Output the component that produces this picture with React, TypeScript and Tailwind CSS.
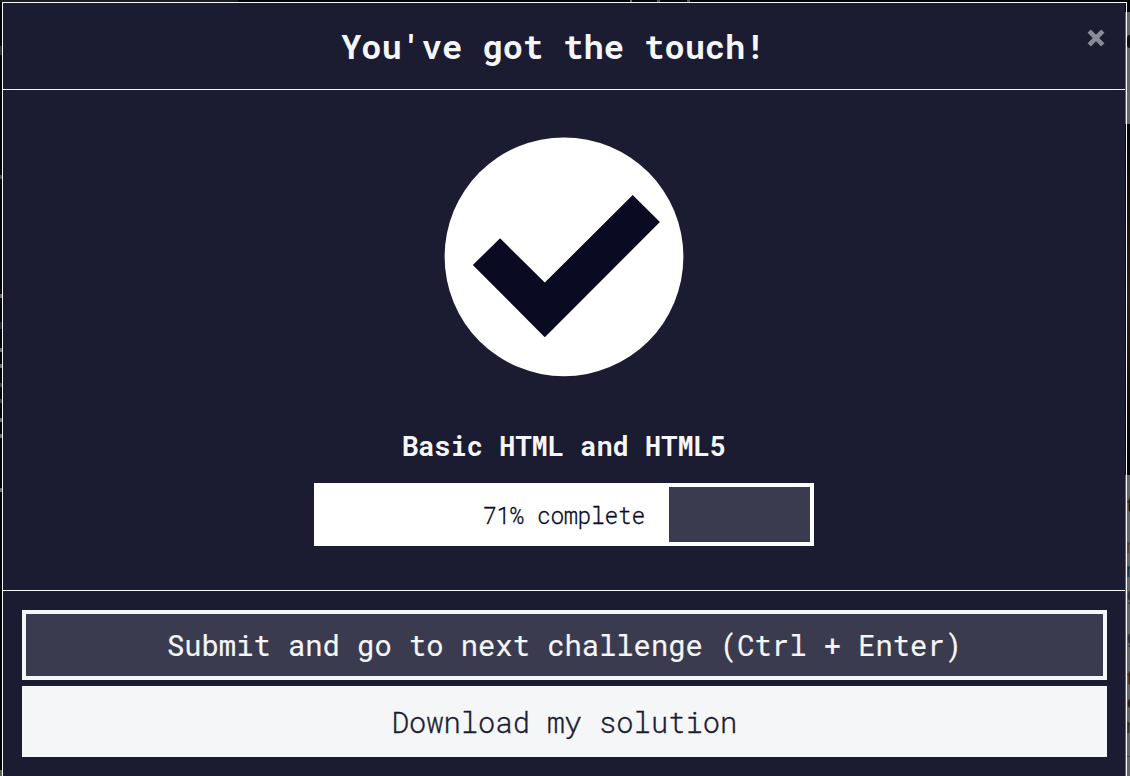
const mono = "font-['Roboto_Mono','DejaVu_Sans_Mono',monospace]";

function CheckIcon() {
  return (
    <svg width="240" height="240" viewBox="0 0 240 240" className="block shrink-0" aria-hidden="true">
      <circle cx="120" cy="119.8" r="119.4" fill="#fff" />
      <path d="M28.8 128L56.1 101.3L100.8 145.6L188.7 58L215.9 85L100.8 200.3Z" fill="#0a0a23" />
    </svg>
  );
}

function CloseIcon() {
  return (
    <svg width="18" height="18" viewBox="0 0 18 18" className="block" aria-hidden="true">
      <path d="M2.2 2.2L15.8 15.8M15.8 2.2L2.2 15.8" stroke="#8b8b98" strokeWidth="4.6" />
    </svg>
  );
}

function LeftEdge() {
  return (
    <div className="flex w-[2px] shrink-0 flex-col items-stretch bg-[#02020c]">
      <div className="mt-[44px] h-[9px] bg-[#2a3138]" />
      <div className="mt-[120px] h-[4px] bg-[#4b4b4d]" />
      <div className="mt-[115px] h-[4px] bg-[#6b6b6b]" />
      <div className="mt-[24px] h-[7px] bg-[#26263e]" />
      <div className="mt-[19px] h-[4px] bg-[#6b6b6b]" />
      <div className="mt-[12px] h-[4px] bg-[#6b6b6b]" />
      <div className="mt-[15px] h-[4px] bg-[#3b4249]" />
      <div className="mt-[12px] h-[4px] bg-[#3b4249]" />
      <div className="mt-[15px] h-[4px] bg-[#6b6b6b]" />
      <div className="mt-[12px] h-[4px] bg-[#6b6b6b]" />
      <div className="mt-[50px] h-[4px] bg-[#6b6b6b]" />
      <div className="mt-auto h-[6px] bg-[#5e5e5a]" />
    </div>
  );
}

function RightEdge() {
  return (
    <div className="flex w-[3px] shrink-0 flex-col overflow-hidden bg-[#666] font-['Liberation_Sans',sans-serif] text-[20px] leading-[24px]">
      <div className="h-[10px] shrink-0 bg-[#02020c]" />
      <div className="flex h-[112px] shrink-0 flex-col pt-[23px]">
        <div className="h-[13px] w-[6px] rounded-full bg-[#14100c]" />
      </div>
      <div className="h-[351px] shrink-0 bg-linear-to-b from-[#090704] via-[#30200f] to-[#050403]" />
      <div className="flex shrink-0 flex-col pt-[18px]">
        <span className="text-[#171b24]">t</span>
        <span className="mt-[17px] -ml-px text-[#5b4520]">n</span>
        <span className="-ml-px text-[#163655]">r</span>
        <span className="text-[#222f3d]">g</span>
        <span className="mt-[19px] text-[#222f3d]">g</span>
        <span className="mt-[17px] text-[#40230b]">t</span>
        <span className="text-[#2b1b12]">e</span>
        <span className="-ml-px text-[#3c2d0c]">r</span>
      </div>
      <div className="mt-[18px] h-px shrink-0 bg-[#444]" />
    </div>
  );
}

function InnerRightEdge() {
  return (
    <div className="flex w-px shrink-0 flex-col bg-[#1b1b32]">
      <div className="h-[9px] bg-[#02020c]" />
      <div className="h-[112px] bg-[#666]" />
      <div className="h-[351px] bg-[#0c0a10]" />
      <div className="flex-1 bg-[#666]" />
    </div>
  );
}

export default function App() {
  return (
    <div className="flex h-[776px] w-[1130px] flex-col overflow-hidden bg-[#02020c]">
      <div className="flex h-[2px] shrink-0">
        <div className="w-[238px] bg-[#1c1c20]" />
        <div className="ml-[392px] w-[2px] bg-[#6b6b6b]" />
        <div className="ml-[25px] w-[3px] bg-[#55555a]" />
        <div className="ml-[27px] w-[3px] bg-[#55555a]" />
      </div>
      <div className="flex min-h-0 flex-1">
        <LeftEdge />
        <div
          role="dialog"
          className="flex w-[1125px] shrink-0 border-x border-t border-[#f8f9fb] bg-[#1b1b32] text-[#f5f6f7]"
        >
          <div className="flex w-[1122px] shrink-0 flex-col">
            <header className="flex h-[87px] shrink-0 border-b border-[#f5f6f7]">
              <h1 className={`flex-1 pl-[338px] pt-[21px] text-[33.7px] leading-[45px] font-bold whitespace-pre ${mono}`}>
                You've got the touch!
              </h1>
              <button aria-label="Close" className="mt-[26px] mr-[20px] h-[18px] w-[18px]">
                <CloseIcon />
              </button>
            </header>
            <main className="flex h-[501px] shrink-0 flex-col items-center border-b border-[#f5f6f7] pt-[47px]">
              <CheckIcon />
              <h2 className={`mt-[51px] text-[27px] leading-[36px] font-bold whitespace-pre ${mono}`}>
                Basic HTML and HTML5
              </h2>
              <div className="mt-[19px] flex h-[63px] w-[500px] border-4 border-white bg-[#3b3b4f]">
                <div
                  className={`flex w-[351px] items-center justify-end bg-white pt-px pr-[24px] text-[23px] font-light tracking-[-0.3px] [-webkit-text-stroke:0.3px_#0a0a23] whitespace-pre text-[#0a0a23] ${mono}`}
                >
                  71% complete
                </div>
              </div>
            </main>
            <footer className={`flex flex-1 flex-col gap-[6px] pr-[18px] pl-[19px] pt-[19px] text-[28.8px] whitespace-pre ${mono}`}>
              <button className="flex h-[70px] shrink-0 items-center justify-center border-4 border-[#f5f6f7] bg-[#3b3b4f] pt-[2px] [-webkit-text-stroke:0.2px_#f5f6f7]">
                Submit and go to next challenge (Ctrl + Enter)
              </button>
              <button className="flex h-[71px] shrink-0 items-center justify-center bg-[#f5f6f7] pt-[2px] font-light text-[#1b1b32] [-webkit-text-stroke:0.35px_#1b1b32]">
                Download my solution
              </button>
            </footer>
          </div>
          <InnerRightEdge />
        </div>
        <RightEdge />
      </div>
    </div>
  );
}
